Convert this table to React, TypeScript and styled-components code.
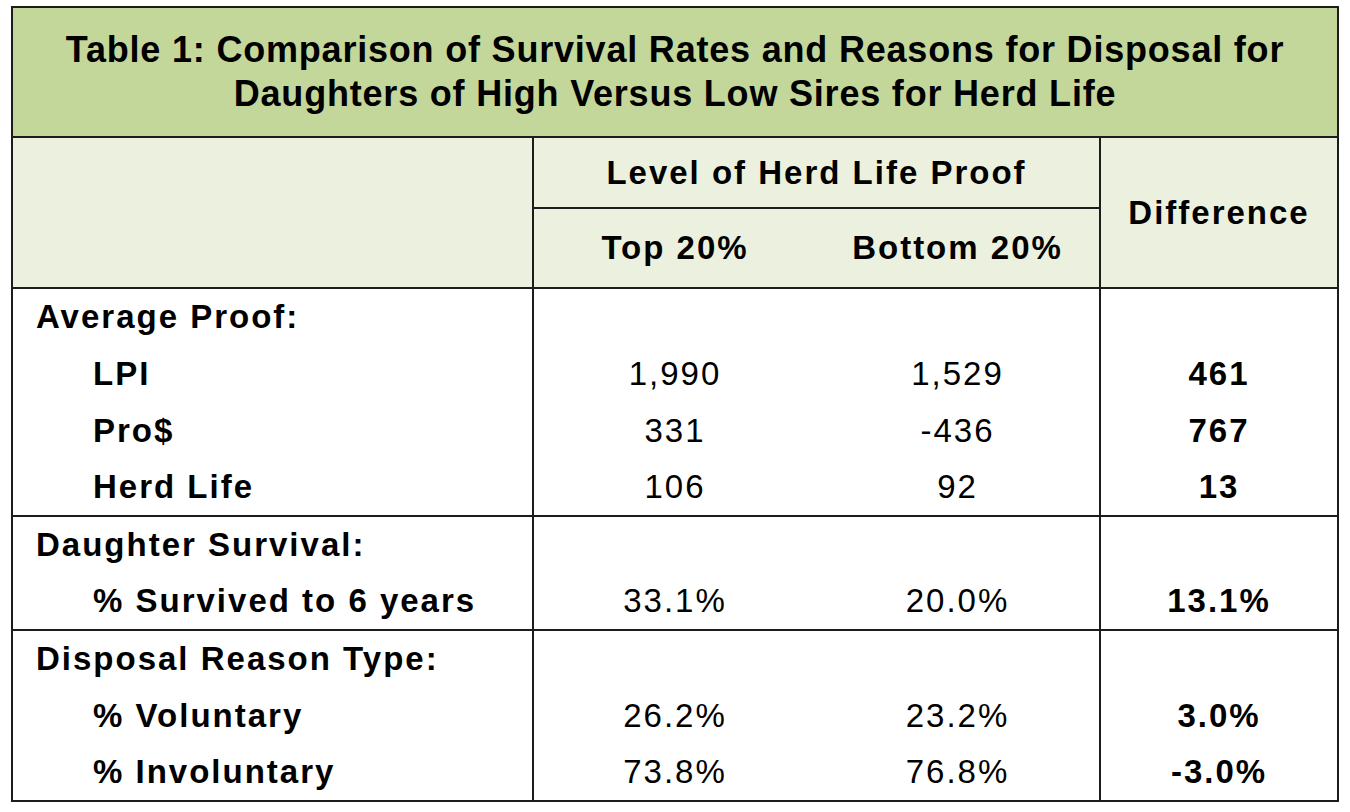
import React from "react";
import styled, { createGlobalStyle } from "styled-components";

const Global = createGlobalStyle`
  html, body { margin: 0; padding: 0; background: #ffffff; }
  body { font-family: "Liberation Sans", Arial, sans-serif; color: #000; }
`;

const Page = styled.div`
  width: 1350px;
  height: 812px;
  padding: 6px 0 0 11px;
  box-sizing: border-box;
`;

const Table = styled.table`
  border-collapse: collapse;
  width: 1326px;
  table-layout: fixed;
  border: 2px solid #1c1c1c;
`;

const TitleCell = styled.th`
  background: #c4d79b;
  height: 130px;
  padding: 0 20px;
  box-sizing: border-box;
  font-size: 36px;
  line-height: 44px;
  letter-spacing: 0.8px;
  font-weight: 700;
  text-align: center;
  border: 2px solid #1c1c1c;
`;

const HeadCell = styled.th<{ $h?: number; $underline?: boolean }>`
  background: #ebf1de;
  font-size: 33px;
  letter-spacing: 2px;
  font-weight: 700;
  text-align: center;
  padding: 0;
  height: ${(p) => (p.$h ? `${p.$h}px` : "auto")};
  border-left: 2px solid #1c1c1c;
  border-right: 2px solid #1c1c1c;
  border-bottom: ${(p) => (p.$underline ? "2px solid #1c1c1c" : "none")};
`;

const Row = styled.tr<{ $last?: boolean }>`
  height: 57px;
  border-bottom: ${(p) => (p.$last ? "2px solid #1c1c1c" : "none")};
`;

const LabelCell = styled.td<{ $indent?: boolean }>`
  font-size: 33px;
  letter-spacing: 2px;
  font-weight: 700;
  padding: 0 0 0 ${(p) => (p.$indent ? "80px" : "23px")};
  border-right: 2px solid #1c1c1c;
  white-space: nowrap;
`;

const ValueCell = styled.td<{ $bold?: boolean }>`
  font-size: 33px;
  letter-spacing: 2px;
  font-weight: ${(p) => (p.$bold ? 700 : 400)};
  text-align: center;
  padding: 0;
`;

const DiffCell = styled(ValueCell)`
  border-left: 2px solid #1c1c1c;
`;

type DataRow = { label: string; indent?: boolean; top?: string; bottom?: string; diff?: string };

const sections: DataRow[][] = [
  [
    { label: "Average Proof:" },
    { label: "LPI", indent: true, top: "1,990", bottom: "1,529", diff: "461" },
    { label: "Pro$", indent: true, top: "331", bottom: "-436", diff: "767" },
    { label: "Herd Life", indent: true, top: "106", bottom: "92", diff: "13" },
  ],
  [
    { label: "Daughter Survival:" },
    { label: "% Survived to 6 years", indent: true, top: "33.1%", bottom: "20.0%", diff: "13.1%" },
  ],
  [
    { label: "Disposal Reason Type:" },
    { label: "% Voluntary", indent: true, top: "26.2%", bottom: "23.2%", diff: "3.0%" },
    { label: "% Involuntary", indent: true, top: "73.8%", bottom: "76.8%", diff: "-3.0%" },
  ],
];

export default function App() {
  return (
    <Page>
      <Global />
      <Table>
        <colgroup>
          <col style={{ width: 521 }} />
          <col style={{ width: 283 }} />
          <col style={{ width: 284 }} />
          <col style={{ width: 238 }} />
        </colgroup>
        <thead>
          <tr>
            <TitleCell colSpan={4}>
              Table 1: Comparison of Survival Rates and Reasons for Disposal for
              <br />
              Daughters of High Versus Low Sires for Herd Life
            </TitleCell>
          </tr>
          <tr>
            <HeadCell rowSpan={2} $underline />
            <HeadCell colSpan={2} $h={69} $underline>
              Level of Herd Life Proof
            </HeadCell>
            <HeadCell rowSpan={2} $underline>
              Difference
            </HeadCell>
          </tr>
          <tr>
            <HeadCell $h={78} $underline style={{ borderRight: "none" }}>
              Top 20%
            </HeadCell>
            <HeadCell $h={78} $underline style={{ borderLeft: "none" }}>
              Bottom 20%
            </HeadCell>
          </tr>
        </thead>
        <tbody>
          {sections.map((sec, si) =>
            sec.map((r, ri) => (
              <Row key={`${si}-${ri}`} $last={ri === sec.length - 1}>
                <LabelCell $indent={r.indent}>{r.label}</LabelCell>
                <ValueCell>{r.top ?? ""}</ValueCell>
                <ValueCell>{r.bottom ?? ""}</ValueCell>
                <DiffCell $bold>{r.diff ?? ""}</DiffCell>
              </Row>
            ))
          )}
        </tbody>
      </Table>
    </Page>
  );
}
